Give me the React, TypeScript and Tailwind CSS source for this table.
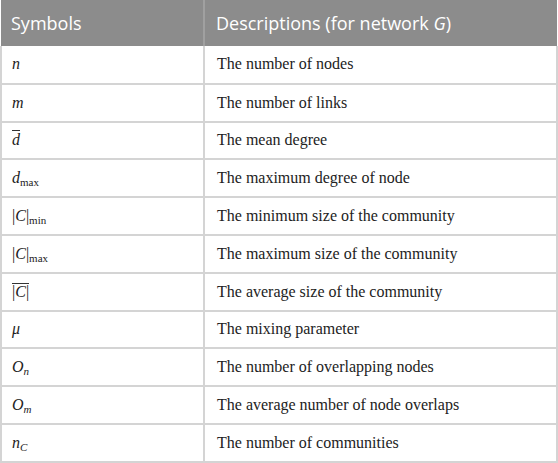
import React from "react";

const serif = "font-['Liberation_Serif','DejaVu_Serif',serif]";

function Sub({ children, italic }: { children: React.ReactNode; italic?: boolean }) {
  return (
    <span className={`text-[11px] align-[-3px] ${italic ? "italic" : "not-italic"}`}>
      {children}
    </span>
  );
}

const rows: { sym: React.ReactNode; desc: string }[] = [
  { sym: <i>n</i>, desc: "The number of nodes" },
  { sym: <i>m</i>, desc: "The number of links" },
  {
    sym: <i className="overline decoration-1 decoration-[#333]">d</i>,
    desc: "The mean degree",
  },
  {
    sym: (
      <>
        <i>d</i>
        <Sub>max</Sub>
      </>
    ),
    desc: "The maximum degree of node",
  },
  {
    sym: (
      <>
        |<i>C</i>|<Sub>min</Sub>
      </>
    ),
    desc: "The minimum size of the community",
  },
  {
    sym: (
      <>
        |<i>C</i>|<Sub>max</Sub>
      </>
    ),
    desc: "The maximum size of the community",
  },
  {
    sym: (
      <span className="border-t border-[#333] leading-[15px] inline-block">
        |<i>C</i>|
      </span>
    ),
    desc: "The average size of the community",
  },
  { sym: <i>μ</i>, desc: "The mixing parameter" },
  {
    sym: (
      <>
        <i>O</i>
        <Sub italic>n</Sub>
      </>
    ),
    desc: "The number of overlapping nodes",
  },
  {
    sym: (
      <>
        <i>O</i>
        <Sub italic>m</Sub>
      </>
    ),
    desc: "The average number of node overlaps",
  },
  {
    sym: (
      <>
        <i>n</i>
        <Sub italic>C</Sub>
      </>
    ),
    desc: "The number of communities",
  },
];

export default function App() {
  return (
    <div className="w-[558px] h-[463px] bg-white">
      <table className="w-[558px] border-collapse table-fixed">
        <colgroup>
          <col className="w-[203px]" />
          <col />
        </colgroup>
        <thead>
          <tr className="h-[46px] bg-[#8c8c8c] text-white font-['Open_Sans',sans-serif] text-[18px] text-left">
            <th className="font-normal pl-[10px] border-r-2 border-[#a0a0a0]">Symbols</th>
            <th className="font-normal pl-[11px]">
              Descriptions (for network <i>G</i>)
            </th>
          </tr>
        </thead>
        <tbody className={`${serif} text-[16px] text-[#222]`}>
          {rows.map((r, i) => (
            <tr key={i} className="h-[37.8px] border-b-2 border-[#d4d4d4]">
              <td className="pl-[10px] border-l-2 border-r-2 border-[#d4d4d4]">{r.sym}</td>
              <td className="pl-[12px] border-r-2 border-[#d4d4d4]">{r.desc}</td>
            </tr>
          ))}
        </tbody>
      </table>
    </div>
  );
}
